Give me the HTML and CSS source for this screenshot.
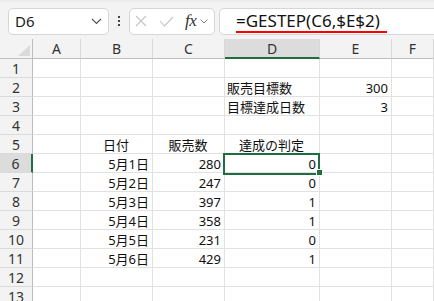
FILE: index.html
```html
<!DOCTYPE html>
<html lang="ja">
<head>
  <meta charset="UTF-8">
  <title>GESTEP</title>
  <link rel="stylesheet" href="styles.css">
</head>
<body>
  <div class="app">

    <div class="toolbar">
      <div class="namebox">
        <span class="ref">D6</span>
        <svg class="chev" width="11" height="7" viewBox="0 0 11 7"><path d="M1 1 L5.5 5.5 L10 1" fill="none" stroke="#555" stroke-width="1.2"/></svg>
      </div>

      <div class="grip"><i></i><i></i><i></i></div>

      <div class="fxbox">
        <svg width="12" height="12" viewBox="0 0 12 12"><path d="M1 1 L11 11 M11 1 L1 11" stroke="#c4c4c4" stroke-width="1.1"/></svg>
        <svg class="check" width="15" height="11" viewBox="0 0 15 11"><path d="M1 5 L5.5 10 L14 1" fill="none" stroke="#c4c4c4" stroke-width="1.1"/></svg>
        <span class="fx">fx</span>
        <svg width="8" height="5" viewBox="0 0 8 5"><path d="M0.5 0.5 L4 4 L7.5 0.5" fill="none" stroke="#888" stroke-width="1"/></svg>
      </div>

      <div class="formula">
        <span class="ftext">=GESTEP(C6,$E$2)</span>
      </div>
    </div>

    <div class="sheet" id="sheet"></div>

  </div>

  <script>
    var cols = ['A', 'B', 'C', 'D', 'E', 'F'];

    // row number -> cells keyed by column
    var data = {
      2: { D: ['販売目標数', 'left'], E: ['300', 'right'] },
      3: { D: ['目標達成日数', 'left'], E: ['3', 'right'] },
      5: { B: ['日付', 'center'], C: ['販売数', 'center'], D: ['達成の判定', 'center'] },
      6: { B: ['5月1日', 'right'], C: ['280', 'right'], D: ['0', 'right'] },
      7: { B: ['5月2日', 'right'], C: ['247', 'right'], D: ['0', 'right'] },
      8: { B: ['5月3日', 'right'], C: ['397', 'right'], D: ['1', 'right'] },
      9: { B: ['5月4日', 'right'], C: ['358', 'right'], D: ['1', 'right'] },
      10: { B: ['5月5日', 'right'], C: ['231', 'right'], D: ['0', 'right'] },
      11: { B: ['5月6日', 'right'], C: ['429', 'right'], D: ['1', 'right'] }
    };

    var html = '<div class="corner"><span class="tri"></span></div>';
    html += cols.map(function (c) {
      return `<div class="colhead ${c === 'D' ? 'active' : ''}">${c}</div>`;
    }).join('');

    for (var r = 1; r <= 13; r++) {
      html += `<div class="rowhead ${r === 6 ? 'active' : ''}">${r}</div>`;
      var row = data[r] || {};
      html += cols.map(function (c) {
        var v = row[c];
        var sel = (r === 6 && c === 'D') ? ' selected' : '';
        if (!v) return `<div class="cell${sel}"></div>`;
        return `<div class="cell ${v[1]}${sel}">${v[0]}</div>`;
      }).join('');
    }

    document.getElementById('sheet').innerHTML = html;
  </script>
</body>
</html>
```

FILE: styles.css
```css
body {
  margin: 0;
  background: white;
  overflow: hidden;
  font-family: "Noto Sans", "Noto Sans CJK JP", sans-serif;
}

.app {
  width: 434px;
  height: 301px;
  overflow: hidden;
}

/* formula bar */
.toolbar {
  display: flex;
  align-items: center;
  height: 39px;
  background: #f3f3f3;
  border-top: 2px solid #ebebeb;
  box-sizing: border-box;
  padding-left: 8px;
}

.namebox {
  display: flex;
  align-items: center;
  justify-content: space-between;
  width: 101px;
  height: 27px;
  box-sizing: border-box;
  background: white;
  border: 1px solid #d6d6d6;
  border-radius: 5px;
  padding: 0 6px 0 6px;
  margin-top: 1px;
}

.ref {
  font-size: 15px;
  color: #1a1a1a;
}

.grip {
  width: 20px;
  display: flex;
  flex-direction: column;
  align-items: center;
  gap: 2px;
  margin-top: 1px;
}

.grip i {
  width: 2px;
  height: 2px;
  background: #444;
}

.fxbox {
  display: flex;
  align-items: center;
  width: 86px;
  height: 27px;
  box-sizing: border-box;
  background: white;
  border: 1px solid #d6d6d6;
  border-radius: 5px;
  padding-left: 5px;
  margin-top: 1px;
}

.fxbox .check {
  margin-left: 12px;
}

.fx {
  font-family: "Liberation Serif", serif;
  font-style: italic;
  font-size: 17px;
  color: #333;
  margin-left: 11px;
  margin-right: 4px;
  letter-spacing: -0.5px;
}

.formula {
  flex: 1;
  height: 27px;
  box-sizing: border-box;
  background: white;
  border: 1px solid #d6d6d6;
  border-radius: 5px;
  margin-left: 4px;
  margin-right: -10px;
  margin-top: 1px;
  padding-left: 16px;
  display: flex;
  align-items: center;
}

.ftext {
  font-size: 17px;
  color: #111;
  line-height: 20px;
  padding: 0 7px 0 0;
  border-bottom: 2px solid #ff0000;
  margin-top: 1px;
}

/* grid */
.sheet {
  display: grid;
  grid-template-columns: 33px 48px 72px 72px 95px 72px 1fr;
  grid-template-rows: 20px;
  grid-auto-rows: 19px;
  font-size: 13px;
  color: #111;
}

.corner, .colhead, .rowhead {
  background: #f3f3f3;
  color: #333;
  box-sizing: border-box;
}

.corner {
  border-right: 1px solid #bdbdbd;
  border-bottom: 1px solid #bdbdbd;
  display: flex;
  align-items: flex-end;
  justify-content: flex-end;
  padding: 0 2px 2px 0;
}

.tri {
  width: 0;
  height: 0;
  border-left: 12px solid transparent;
  border-bottom: 11px solid #dadada;
}

.colhead {
  display: flex;
  align-items: center;
  justify-content: center;
  border-right: 1px solid #d9d9d9;
  border-bottom: 1px solid #bdbdbd;
  font-size: 14px;
}

.colhead.active {
  background: #dcdcdc;
  border-bottom: 2px solid #1e6e42;
}

.rowhead {
  display: flex;
  align-items: center;
  justify-content: center;
  border-right: 1px solid #bdbdbd;
  border-bottom: 1px solid #dadada;
  font-size: 14px;
}

.rowhead.active {
  background: #dcdcdc;
  border-right: 2px solid #1e6e42;
}

.cell {
  display: flex;
  align-items: center;
  box-sizing: border-box;
  border-right: 1px solid #e1e1e1;
  border-bottom: 1px solid #e1e1e1;
  padding: 1px 3px 0 2px;
  white-space: nowrap;
  position: relative;
}

.cell.left {
  justify-content: flex-start;
}

.cell.right {
  justify-content: flex-end;
}

.cell.center {
  justify-content: center;
}

/* active cell outline + fill handle */
.cell.selected {
  z-index: 2;
}

.cell.selected::before {
  content: "";
  position: absolute;
  top: -1px;
  left: -2px;
  width: 97px;
  height: 22px;
  box-sizing: border-box;
  border: 2px solid #1e6e42;
}

.cell.selected::after {
  content: "";
  position: absolute;
  right: -4px;
  bottom: -4px;
  width: 5px;
  height: 5px;
  background: #1e6e42;
  border: 1px solid white;
}
```
